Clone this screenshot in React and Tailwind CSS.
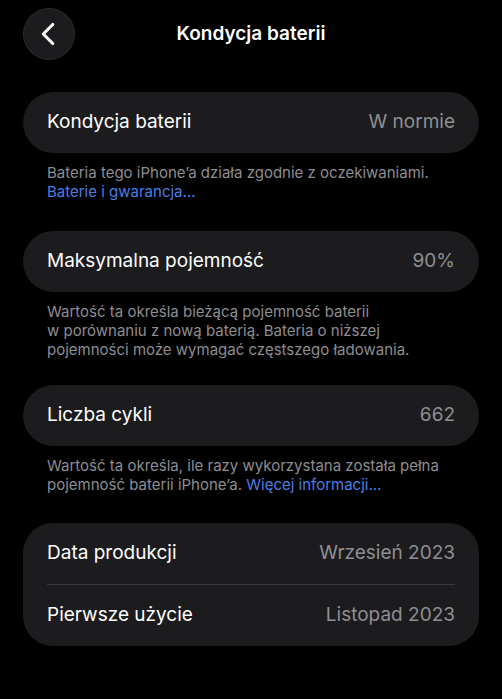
import { ChevronLeft } from "lucide-react";

function Card({ label, value }) {
  return (
    <div className="mx-[23px] flex h-[61px] items-center justify-between rounded-full bg-[#1c1c1e] px-6">
      <span className="text-[19px] text-white">{label}</span>
      <span className="text-[19px] text-[#8e8e93]">{value}</span>
    </div>
  );
}

function Note({ children }) {
  return (
    <p className="mx-[47px] mt-[10px] text-[15px] leading-[19px] text-[#8d8d92]">
      {children}
    </p>
  );
}

export default function App() {
  return (
    <div
      className="min-h-screen w-full bg-black pb-10"
      style={{ fontFamily: "Inter, 'Noto Sans', sans-serif" }}
    >
      <div className="relative flex h-[68px] items-center justify-center">
        <button className="absolute left-[23px] top-[8px] flex h-[52px] w-[52px] items-center justify-center rounded-full border border-[#2c2c2e] bg-[#1c1c1e] text-white">
          <ChevronLeft size={38} strokeWidth={2} className="-ml-[3px]" />
        </button>
        <h1 className="text-[19px] font-semibold text-white">Kondycja baterii</h1>
      </div>

      <div className="mt-[24px]">
        <Card label="Kondycja baterii" value="W normie" />
        <Note>
          Bateria tego iPhone’a działa zgodnie z oczekiwaniami.
          <br />
          <span className="text-[#4a7fe4]">Baterie i gwarancja…</span>
        </Note>
      </div>

      <div className="mt-[30px]">
        <Card label="Maksymalna pojemność" value="90%" />
        <Note>
          Wartość ta określa bieżącą pojemność baterii
          <br />
          w porównaniu z nową baterią. Bateria o niższej
          <br />
          pojemności może wymagać częstszego ładowania.
        </Note>
      </div>

      <div className="mt-[26px]">
        <Card label="Liczba cykli" value="662" />
        <Note>
          Wartość ta określa, ile razy wykorzystana została pełna
          <br />
          pojemność baterii iPhone’a.{" "}
          <span className="text-[#4a7fe4]">Więcej informacji…</span>
        </Note>
      </div>

      <div className="mx-[23px] mt-[29px] rounded-[30px] bg-[#1c1c1e] px-6">
        <div className="flex h-[62px] items-center justify-between border-b border-[#38383a]">
          <span className="text-[19px] text-white">Data produkcji</span>
          <span className="text-[19px] text-[#8e8e93]">Wrzesień 2023</span>
        </div>
        <div className="flex h-[61px] items-center justify-between">
          <span className="text-[19px] text-white">Pierwsze użycie</span>
          <span className="text-[19px] text-[#8e8e93]">Listopad 2023</span>
        </div>
      </div>
    </div>
  );
}
